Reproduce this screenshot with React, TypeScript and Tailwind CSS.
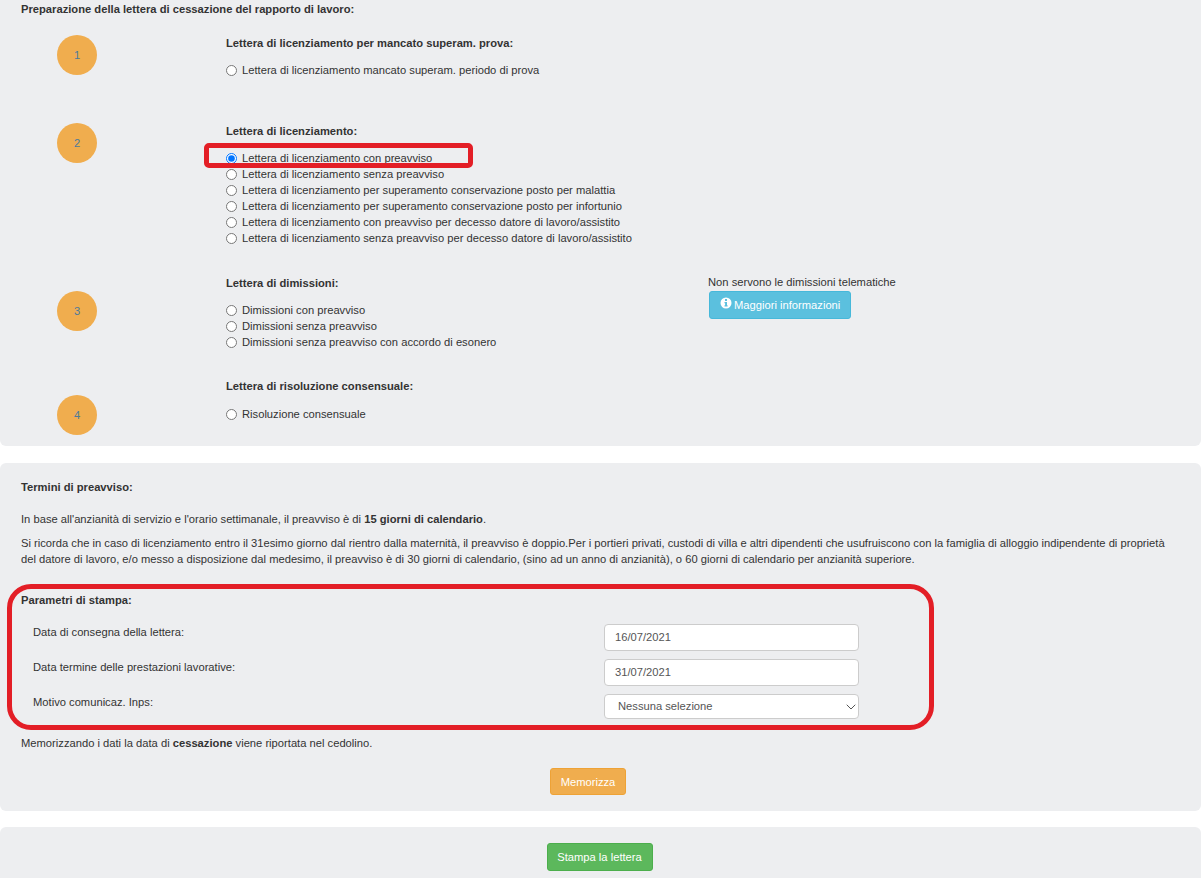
import { ChevronDown } from "lucide-react";
import type { ReactNode } from "react";

function Radio({ label, checked }: { label: string; checked?: boolean }) {
  return (
    <label className="flex h-4 items-center">
      <input type="radio" name="lettera" defaultChecked={checked} className="m-0 h-[11px] w-[11px] shrink-0" />
      <span className="ml-[5px]">{label}</span>
    </label>
  );
}

function Step({
  n,
  title,
  circleClass,
  className,
  children,
  note,
}: {
  n: number;
  title: string;
  circleClass: string;
  className: string;
  children: ReactNode;
  note?: ReactNode;
}) {
  return (
    <div className={`flex ${className}`}>
      <div className="w-[205px] shrink-0 pl-[36px]">
        <div
          className={`flex h-10 w-10 items-center justify-center rounded-full bg-[#f0ad4e] text-[#4d7a9a] ${circleClass}`}
        >
          {n}
        </div>
      </div>
      <div className="w-[482px] shrink-0">
        <p className="h-4 font-bold">{title}</p>
        {children}
      </div>
      {note}
    </div>
  );
}

function Field({ label, children, className }: { label: string; children: ReactNode; className: string }) {
  return (
    <div className={`flex ${className}`}>
      <span className="w-[583px] shrink-0 pl-3">{label}</span>
      {children}
    </div>
  );
}

const inputClass =
  "relative h-[27px] w-[255px] rounded-[4px] border border-[#ccc] bg-white px-[10px] pb-[2px] text-[11.2px] text-[#555] outline-none";

export default function App() {
  return (
    <div
      className="h-[878px] overflow-hidden bg-white text-[11.2px] leading-4 text-[#333]"
      style={{ fontFamily: '"Liberation Sans", Arial, sans-serif' }}
    >
      {/* Scelta della lettera */}
      <section className="h-[446px] rounded-b-md bg-[#edeef0] px-[21px] pt-[1px]">
        <p className="h-4 font-bold">Preparazione della lettera di cessazione del rapporto di lavoro:</p>

        <Step n={1} title="Lettera di licenziamento per mancato superam. prova:" circleClass="" className="mt-[18px] h-[88px]">
          <div className="mt-[11px]">
            <Radio label="Lettera di licenziamento mancato superam. periodo di prova" />
          </div>
        </Step>

        <Step n={2} title="Lettera di licenziamento:" circleClass="" className="h-[152px]">
          <div className="mt-[11px]">
            <div className="relative">
              <Radio checked label="Lettera di licenziamento con preavviso" />
              <div className="absolute top-[-7px] left-[-22px] h-[25px] w-[269px] rounded-[5px] border-[5px] border-[#e31e26]" />
            </div>
            <Radio label="Lettera di licenziamento senza preavviso" />
            <Radio label="Lettera di licenziamento per superamento conservazione posto per malattia" />
            <Radio label="Lettera di licenziamento per superamento conservazione posto per infortunio" />
            <Radio label="Lettera di licenziamento con preavviso per decesso datore di lavoro/assistito" />
            <Radio label="Lettera di licenziamento senza preavviso per decesso datore di lavoro/assistito" />
          </div>
        </Step>

        <Step
          n={3}
          title="Lettera di dimissioni:"
          circleClass="mt-[16px]"
          className="h-[103px]"
          note={
            <div className="mt-[-1px]">
              <p className="h-4">Non servono le dimissioni telematiche</p>
              <button className="mt-[1px] ml-[1px] flex h-[28px] w-[142px] items-center gap-[2px] rounded-[3px] border border-[#46b8da] bg-[#5bc0de] pl-[10px] text-white">
                <svg width="12" height="12" viewBox="0 0 12 12" className="mt-[-4px] shrink-0">
                  <circle cx="6" cy="6" r="5.5" fill="white" />
                  <rect x="5" y="2" width="2" height="2" fill="#5bc0de" />
                  <path d="M4.5 5h2.5v3.2h.6V9.400H4.500V8.200h.6V6.200h-.6z" fill="#5bc0de" />
                </svg>
                Maggiori informazioni
              </button>
            </div>
          }
        >
          <div className="mt-[11px]">
            <Radio label="Dimissioni con preavviso" />
            <Radio label="Dimissioni senza preavviso" />
            <Radio label="Dimissioni senza preavviso con accordo di esonero" />
          </div>
        </Step>

        <Step n={4} title="Lettera di risoluzione consensuale:" circleClass="mt-[17px]" className="">
          <div className="mt-[12px]">
            <Radio label="Risoluzione consensuale" />
          </div>
        </Step>
      </section>

      {/* Preavviso e parametri */}
      <section className="mt-[17px] h-[348px] rounded-md bg-[#edeef0] px-[21px] pt-4">
        <p className="h-4 font-bold">Termini di preavviso:</p>
        <p className="mt-4">
          In base all'anzianità di servizio e l'orario settimanale, il preavviso è di{" "}
          <b>15 giorni di calendario</b>.
        </p>
        <p className="mt-2">
          Si ricorda che in caso di licenziamento entro il 31esimo giorno dal rientro dalla maternità, il preavviso è
          doppio.Per i portieri privati, custodi di villa e altri dipendenti che usufruiscono con la famiglia di alloggio
          indipendente di proprietà del datore di lavoro, e/o messo a disposizione dal medesimo, il preavviso è di 30
          giorni di calendario, (sino ad un anno di anzianità), o 60 giorni di calendario per anzianità superiore.
        </p>

        <div className="relative mt-[25px]">
          <div className="absolute top-[-8px] left-[-14px] h-[146px] w-[927px] rounded-[24px] border-[5px] border-[#e31e26]" />
          <p className="h-4 font-bold">Parametri di stampa:</p>
          <Field label="Data di consegna della lettera:" className="mt-[16px] h-[27px]">
            <input className={inputClass} defaultValue="16/07/2021" />
          </Field>
          <Field label="Data termine delle prestazioni lavorative:" className="mt-2 h-[27px]">
            <input className={inputClass} defaultValue="31/07/2021" />
          </Field>
          <Field label="Motivo comunicaz. Inps:" className="mt-2 h-[25px]">
            <div className="relative h-[25px] w-[255px]">
              <select className="h-[25px] w-full appearance-none rounded-[4px] border border-[#ccc] bg-white px-[13px] pb-[2px] text-[11.2px] text-[#555]">
                <option>Nessuna selezione</option>
              </select>
              <ChevronDown size={16} strokeWidth={1.5} className="pointer-events-none absolute top-[5px] right-0 text-[#555]" />
            </div>
          </Field>
        </div>

        <p className="mt-4">
          Memorizzando i dati la data di <b>cessazione</b> viene riportata nel cedolino.
        </p>
        <div className="mt-[17px] flex justify-center pr-[25px]">
          <button className="h-[27px] w-[76px] rounded-[3px] border border-[#eea236] bg-[#f0ad4e] text-white">
            Memorizza
          </button>
        </div>
      </section>

      {/* Stampa */}
      <section className="mt-4 flex h-[60px] justify-center rounded-t-md bg-[#edeef0] pt-4 pr-[2px]">
        <button className="h-[28px] w-[106px] rounded-[3px] border border-[#4cae4c] bg-[#5cb85c] text-white">
          Stampa la lettera
        </button>
      </section>
    </div>
  );
}
